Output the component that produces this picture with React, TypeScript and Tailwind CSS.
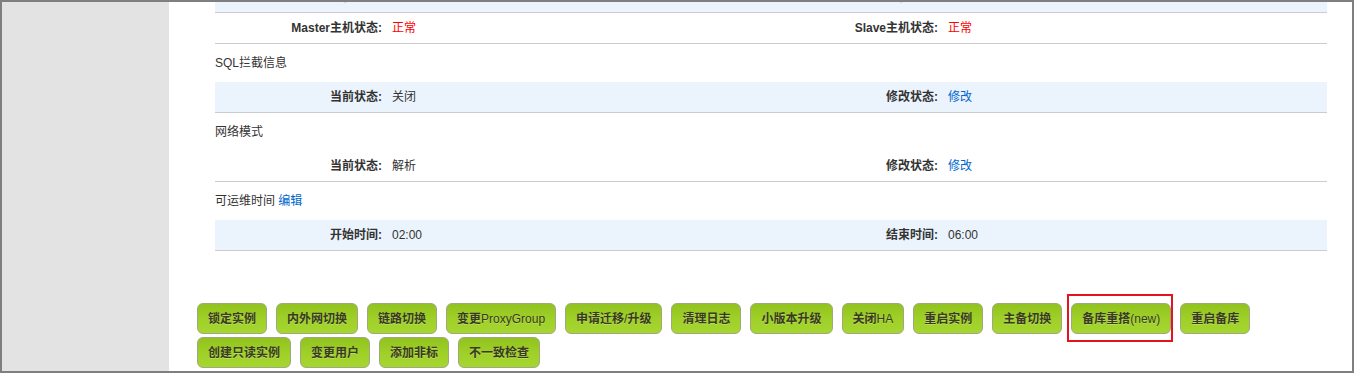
const font = { fontFamily: '"Liberation Sans", "Noto Sans CJK SC", sans-serif' }

interface Cell {
  label: string
  value: string
  tone?: 'red' | 'link'
}

interface RowProps {
  cells: [Cell, Cell]
  blue?: boolean
  first?: boolean
}

const toneClass = (tone?: 'red' | 'link') =>
  tone === 'red' ? 'text-[#ff0000]' : tone === 'link' ? 'text-[#0066cc]' : 'text-[#333]'

const InfoRow = ({ cells, blue, first }: RowProps) => (
  <div
    className={`grid h-[31px] grid-cols-[167px_389px_167px_1fr] items-center border-b border-[#cccccc] text-[12px] ${
      blue ? 'bg-[#ebf3fd]' : 'bg-white'
    } ${first ? '-mt-[20px]' : ''}`}
  >
    {cells.map((c) => (
      <div key={c.label} className="contents">
        <div className="text-right font-bold text-[#333]">{c.label}</div>
        <div className={`pl-[10px] ${toneClass(c.tone)}`}>{c.value}</div>
      </div>
    ))}
  </div>
)

const Title = ({ children }: { children: React.ReactNode }) => (
  <div className="flex h-[38px] items-center text-[12px] text-[#333]">{children}</div>
)

const buttons = [
  '锁定实例',
  '内外网切换',
  '链路切换',
  '变更ProxyGroup',
  '申请迁移/升级',
  '清理日志',
  '小版本升级',
  '关闭HA',
  '重启实例',
  '主备切换',
  '备库重搭(new)',
  '重启备库',
  '创建只读实例',
  '变更用户',
  '添加非标',
  '不一致检查',
]

const ActionButton = ({ text }: { text: string }) => {
  // latin bits render in normal weight, like the original page
  const parts = text.split(/([A-Za-z()/]+)/).filter(Boolean)
  return (
    <button
      className="h-[31px] rounded-[6px] border border-[#a0a880] bg-gradient-to-b from-[#92c21e] via-[#9fd028] to-[#a6d630] px-[10px] text-[12px] font-bold text-[#3a3a22] [text-shadow:0_1px_0_rgba(255,255,255,0.25)]"
    >
      {parts.map((p, i) =>
        /[A-Za-z()/]/.test(p) ? (
          <span key={i} className="font-normal">
            {p}
          </span>
        ) : (
          <span key={i}>{p}</span>
        ),
      )}
    </button>
  )
}

export default function App() {
  return (
    <div
      style={font}
      className="flex h-[373px] w-[1354px] overflow-hidden border-2 border-[#7f7f7f] bg-white"
    >
      <aside className="w-[167px] shrink-0 bg-[#e3e3e3]" />

      <main className="flex-1 pl-[28px] pr-[25px]">
        <div className="ml-[18px]">
          <InfoRow
            first
            blue
            cells={[
              { label: '主机地址:', value: '' },
              { label: '主机地址:', value: '' },
            ]}
          />
          <InfoRow
            cells={[
              { label: 'Master主机状态:', value: '正常', tone: 'red' },
              { label: 'Slave主机状态:', value: '正常', tone: 'red' },
            ]}
          />

          <Title>SQL拦截信息</Title>
          <InfoRow
            blue
            cells={[
              { label: '当前状态:', value: '关闭' },
              { label: '修改状态:', value: '修改', tone: 'link' },
            ]}
          />

          <Title>网络模式</Title>
          <InfoRow
            cells={[
              { label: '当前状态:', value: '解析' },
              { label: '修改状态:', value: '修改', tone: 'link' },
            ]}
          />

          <Title>
            可运维时间&nbsp;<span className="text-[#0066cc]">编辑</span>
          </Title>
          <InfoRow
            blue
            cells={[
              { label: '开始时间:', value: '02:00' },
              { label: '结束时间:', value: '06:00' },
            ]}
          />
        </div>

        <div className="mt-[52px] flex flex-wrap gap-x-[9px] gap-y-[3px]">
          {buttons.map((b) =>
            b === '备库重搭(new)' ? (
              <div key={b} className="relative">
                <ActionButton text={b} />
                {/* review marker around the new action */}
                <span className="pointer-events-none absolute -bottom-[8px] -left-[4px] -right-[2px] -top-[9px] border-2 border-[#e3141e]" />
              </div>
            ) : (
              <ActionButton key={b} text={b} />
            ),
          )}
        </div>
      </main>
    </div>
  )
}
